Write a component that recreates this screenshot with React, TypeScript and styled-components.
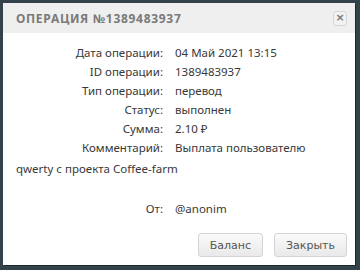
import React from 'react';
import styled, { createGlobalStyle } from 'styled-components';

const GlobalStyle = createGlobalStyle`
  html, body {
    margin: 0;
    padding: 0;
    background: #34424a;
  }
  body {
    width: 360px;
    height: 270px;
    overflow: hidden;
  }
`;

const Screen = styled.div`
  width: 360px;
  height: 270px;
  padding: 3px 5px 5px 3px;
  box-sizing: border-box;
`;

const Dialog = styled.div`
  width: 352px;
  height: 262px;
  background: #ffffff;
  display: flex;
  flex-direction: column;
  box-shadow: 1px 1px 0 #1f282d;
`;

const Header = styled.div`
  height: 30px;
  background: #efefef;
  display: flex;
  align-items: center;
  justify-content: space-between;
  padding: 0 8px 0 13px;
`;

const Title = styled.h3`
  margin: 0;
  font-family: 'Noto Sans', sans-serif;
  font-size: 12px;
  font-weight: 700;
  letter-spacing: 0.7px;
  color: #7a7a7a;
  text-transform: uppercase;
`;

const CloseButton = styled.button`
  width: 14px;
  height: 15px;
  padding: 0;
  border: 1px solid #d6d6d6;
  border-radius: 3px;
  background: #f2f2f2;
  color: #777;
  font-family: 'DejaVu Sans', sans-serif;
  font-size: 11px;
  font-weight: 700;
  line-height: 12px;
  display: flex;
  align-items: center;
  justify-content: center;
`;

const Body = styled.div`
  flex: 1;
  padding: 10px 13px 0 13px;
  font-family: 'Noto Sans', sans-serif;
  font-size: 11.5px;
  color: #383838;
  line-height: 19px;
`;

const Row = styled.div<{ $gap?: boolean; $wrap?: boolean }>`
  margin-top: ${(p) => (p.$gap ? '20px' : p.$wrap ? '-1px' : '0')};
  line-height: ${(p) => (p.$wrap ? '21px' : '19px')};
`;

const Label = styled.span`
  display: inline-block;
  width: 147px;
  text-align: right;
  margin-right: 12px;
`;

const Footer = styled.div`
  display: flex;
  justify-content: flex-end;
  gap: 11px;
  padding: 0 8px 8px 0;
`;

const Button = styled.button`
  height: 24px;
  padding: 0 11px;
  border: 1px solid #d4d4d4;
  border-radius: 3px;
  background: linear-gradient(#fafafa, #e9e9e9);
  color: #555;
  font-family: 'DejaVu Sans', sans-serif;
  font-size: 11px;
`;

const rows = [
  ['Дата операции:', '04 Май 2021 13:15'],
  ['ID операции:', '1389483937'],
  ['Тип операции:', 'перевод'],
  ['Статус:', 'выполнен'],
  ['Сумма:', '2.10 ₽'],
];

export default function App() {
  return (
    <Screen>
      <GlobalStyle />
      <Dialog>
        <Header>
          <Title>Операция №1389483937</Title>
          <CloseButton>×</CloseButton>
        </Header>
        <Body>
          {rows.map(([label, value]) => (
            <Row key={label}>
              <Label>{label}</Label>
              {value}
            </Row>
          ))}
          <Row $wrap>
            <Label>Комментарий:</Label>
            Выплата пользователю qwerty с проекта Coffee-farm
          </Row>
          <Row $gap>
            <Label>От:</Label>
            @anonim
          </Row>
        </Body>
        <Footer>
          <Button>Баланс</Button>
          <Button>Закрыть</Button>
        </Footer>
      </Dialog>
    </Screen>
  );
}
